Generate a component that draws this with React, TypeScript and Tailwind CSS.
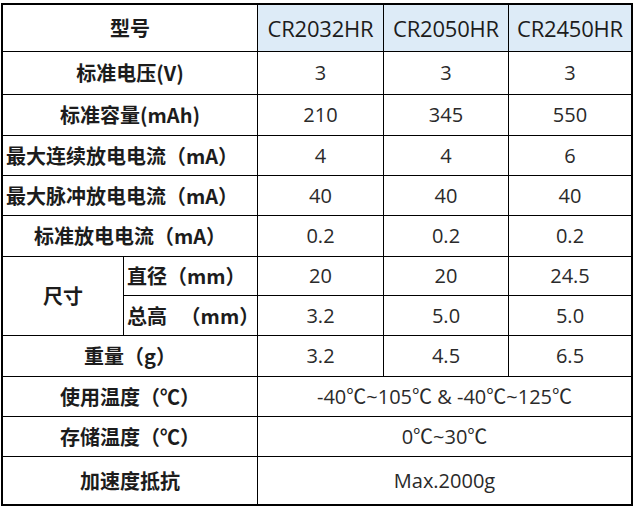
import React from 'react';

const models = ["CR2032HR", "CR2050HR", "CR2450HR"];

const rows = [
  { label: "标准电压(V)", values: ["3", "3", "3"], h: "h-[42px]", left: false },
  { label: "标准容量(mAh)", values: ["210", "345", "550"], h: "h-[40px]", left: false },
  { label: "最大连续放电电流（mA）", values: ["4", "4", "6"], h: "h-[39px]", left: true },
  { label: "最大脉冲放电电流（mA）", values: ["40", "40", "40"], h: "h-[39px]", left: true },
  { label: "标准放电电流（mA）", values: ["0.2", "0.2", "0.2"], h: "h-[40px]", left: false },
];

const labelFont = "font-['Noto_Sans_CJK_SC','Noto_Sans',sans-serif] font-bold text-[20px] text-[#1c1c1c]";
const valueFont = "font-['Open_Sans','Noto_Sans_CJK_SC',sans-serif] text-[20px] text-[#2a2a2a]";

function Label({ children, className = "" }: { children: React.ReactNode; className?: string }) {
  return (
    <div className={`bg-white flex items-center justify-center whitespace-nowrap ${labelFont} ${className}`}>
      {children}
    </div>
  );
}

function Value({ children, className = "" }: { children: React.ReactNode; className?: string }) {
  return (
    <div className={`bg-white flex items-center justify-center whitespace-nowrap ${valueFont} ${className}`}>
      {children}
    </div>
  );
}

export default function App() {
  return (
    <div className="w-[637px] h-[510px] bg-white pt-[3px] pl-[1px]">
      <div className="w-[632px] border-2 border-black bg-black grid grid-cols-[120px_133px_125px_124px_122px] gap-px">
        {/* header */}
        <Label className="col-span-2 h-[46px] bg-[#ddebf7]">型号</Label>
        {models.map((m) => (
          <div
            key={m}
            className="bg-[#ddebf7] flex items-center justify-center font-['Open_Sans',sans-serif] text-[22px] tracking-[-0.2px] text-[#1c1c1c]"
          >
            {m}
          </div>
        ))}

        {rows.map((r) => (
          <React.Fragment key={r.label}>
            <Label className={`col-span-2 ${r.h} ${r.left ? "justify-start pl-[3px]" : ""}`}>{r.label}</Label>
            {r.values.map((v, i) => (
              <Value key={i}>{v}</Value>
            ))}
          </React.Fragment>
        ))}

        {/* 尺寸 */}
        <Label className="row-span-2">尺寸</Label>
        <Label className="h-[38px] justify-start pl-[3px]">直径（mm）</Label>
        <Value>20</Value>
        <Value>20</Value>
        <Value>24.5</Value>
        <Label className="h-[39px] justify-start pl-[3px]">总高&nbsp;&nbsp;&nbsp;（mm）</Label>
        <Value>3.2</Value>
        <Value>5.0</Value>
        <Value>5.0</Value>

        <Label className="col-span-2 h-[40px]">重量（g）</Label>
        <Value>3.2</Value>
        <Value>4.5</Value>
        <Value>6.5</Value>

        <Label className="col-span-2 h-[39px]">使用温度（℃）</Label>
        <Value className="col-span-3">-40℃~105℃ &amp; -40℃~125℃</Value>

        <Label className="col-span-2 h-[39px]">存储温度（℃）</Label>
        <Value className="col-span-3">0℃~30℃</Value>

        <Label className="col-span-2 h-[47px]">加速度抵抗</Label>
        <Value className="col-span-3">Max.2000g</Value>
      </div>
    </div>
  );
}
